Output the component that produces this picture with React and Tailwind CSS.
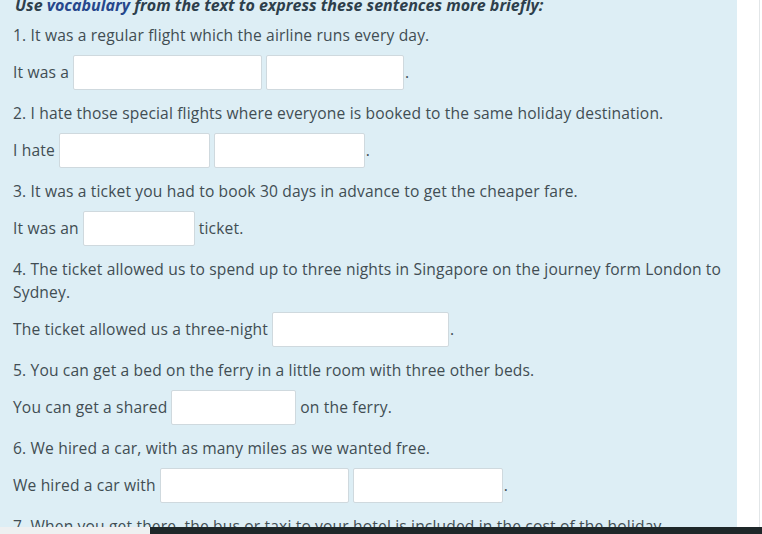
import React from 'react';

const Blank = ({ w }) => (
  <span
    className={`inline-block h-[35px] ${w} bg-white border border-[#cfd9de] rounded-[2px] shrink-0`}
  />
);

const questions = [
  {
    q: '1. It was a regular flight which the airline runs every day.',
    row: [['text', 'It was a'], ['blank', 'w-[189px]'], ['blank', 'w-[138px]'], ['dot', '.']],
  },
  {
    q: '2. I hate those special flights where everyone is booked to the same holiday destination.',
    row: [['text', 'I hate'], ['blank', 'w-[151px]'], ['blank', 'w-[151px]'], ['dot', '.']],
  },
  {
    q: '3. It was a ticket you had to book 30 days in advance to get the cheaper fare.',
    row: [['text', 'It was an'], ['blank', 'w-[112px]'], ['text', 'ticket.']],
  },
  {
    q: '4. The ticket allowed us to spend up to three nights in Singapore on the journey form London to Sydney.',
    row: [['text', 'The ticket allowed us a three-night'], ['blank', 'w-[177px]'], ['dot', '.']],
  },
  {
    q: '5. You can get a bed on the ferry in a little room with three other beds.',
    row: [['text', 'You can get a shared'], ['blank', 'w-[125px]'], ['text', 'on the ferry.']],
  },
  {
    q: '6. We hired a car, with as many miles as we wanted free.',
    row: [['text', 'We hired a car with'], ['blank', 'w-[189px]'], ['blank', 'w-[150px]'], ['dot', '.']],
  },
  {
    q: '7. When you get there, the bus or taxi to your hotel is included in the cost of the holiday.',
    row: [],
  },
];

export default function App() {
  return (
    <div
      className="relative flex h-[534px] w-[762px] overflow-hidden bg-white text-[#414d53]"
      style={{ fontFamily: '"Open Sans", "Liberation Sans", sans-serif' }}
    >
      <div className="w-[737px] shrink-0 bg-[#ddeef5] pl-[13px] pr-[10px] tracking-[0.15px]">
        <p className="-mt-[6px] mb-[7px] pl-[2px] text-[16px] leading-[23px] font-bold italic tracking-normal text-[#2e3f4c] whitespace-nowrap">
          Use <span className="text-[#26478c]">vocabulary</span> from the text to express these sentences more briefly:
        </p>
        {questions.map((item, i) => (
          <div key={i}>
            <p className="mb-[8px] text-[15.6px] leading-[23px]">{item.q}</p>
            {item.row.length > 0 && (
              <div className="mb-[12px] flex h-[35px] items-center gap-[4px] text-[15.6px]">
                {item.row.map(([kind, val], j) =>
                  kind === 'blank' ? (
                    <Blank key={j} w={val} />
                  ) : kind === 'dot' ? (
                    <span key={j} className="-ml-[3px]">{val}</span>
                  ) : (
                    <span key={j} className="whitespace-nowrap">{val}</span>
                  )
                )}
              </div>
            )}
          </div>
        ))}
      </div>
      <div className="w-[22px] shrink-0 bg-white" />
      <div className="w-px shrink-0 bg-[#e2e6e8]" />
      <div className="flex-1 bg-white" />

      <div className="absolute bottom-0 left-0 right-0 flex h-[7px]">
        <div className="w-[150px] bg-[#eef0f1]" />
        <div className="flex-1 bg-[#1e2729]" />
      </div>
    </div>
  );
}
